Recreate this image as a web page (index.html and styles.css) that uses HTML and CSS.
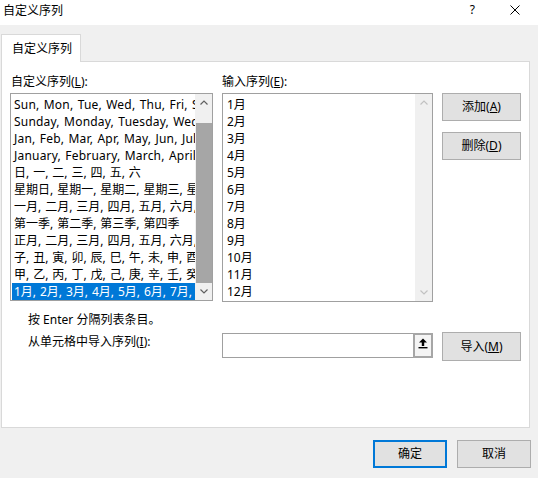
FILE: index.html
```html
<!DOCTYPE html>
<html lang="zh-CN">
<head>
<meta charset="utf-8">
<title>自定义序列</title>
<link rel="stylesheet" href="styles.css">
</head>
<body>
<div class="titlebar">
  <span class="title">自定义序列</span>
  <div class="controls">
    <span class="help">?</span>
    <svg class="close" width="10" height="10" viewBox="0 0 10 10"><path d="M0.5 0.5 L9.5 9.5 M9.5 0.5 L0.5 9.5" stroke="#000" stroke-width="1" fill="none"/></svg>
  </div>
</div>
<div class="tabs"><div class="tab">自定义序列</div></div>
<div class="panel">
  <div class="top">
    <div class="label first">自定义序列(<u>L</u>):</div>
    <div class="label">输入序列(<u>E</u>):</div>
    <div class="spacer"></div>
    <div class="listbox lists">
      <div class="items">
        <div class="item latin">Sun, Mon, Tue, Wed, Thu, Fri, Sat</div>
        <div class="item latin">Sunday, Monday, Tuesday, Wednesday, Thursday, Friday, Saturday</div>
        <div class="item latin">Jan, Feb, Mar, Apr, May, Jun, Jul, Aug, Sep, Oct, Nov, Dec</div>
        <div class="item latin">January, February, March, April, May, June, July, August, September, October, November, December</div>
        <div class="item">日, 一, 二, 三, 四, 五, 六</div>
        <div class="item">星期日, 星期一, 星期二, 星期三, 星期四, 星期五, 星期六</div>
        <div class="item">一月, 二月, 三月, 四月, 五月, 六月, 七月, 八月, 九月, 十月, 十一月, 十二月</div>
        <div class="item">第一季, 第二季, 第三季, 第四季</div>
        <div class="item">正月, 二月, 三月, 四月, 五月, 六月, 七月, 八月, 九月, 十月, 十一月, 腊月</div>
        <div class="item">子, 丑, 寅, 卯, 辰, 巳, 午, 未, 申, 酉, 戌, 亥</div>
        <div class="item">甲, 乙, 丙, 丁, 戊, 己, 庚, 辛, 壬, 癸</div>
        <div class="item selected">1月, 2月, 3月, 4月, 5月, 6月, 7月, 8月, 9月, 10月, 11月, 12月</div>
      </div>
      <div class="scrollbar">
        <div class="arrow"><svg width="8" height="5" viewBox="0 0 8 5"><path d="M0.5 4.5 L4 1 L7.5 4.5" stroke="#606060" stroke-width="1.2" fill="none"/></svg></div>
        <div class="track"><div class="thumb"></div></div>
        <div class="arrow"><svg width="8" height="5" viewBox="0 0 8 5"><path d="M0.5 0.5 L4 4 L7.5 0.5" stroke="#606060" stroke-width="1.2" fill="none"/></svg></div>
      </div>
    </div>
    <div class="listbox entries">
      <div class="items">
        <div class="entry">1月</div>
        <div class="entry">2月</div>
        <div class="entry">3月</div>
        <div class="entry">4月</div>
        <div class="entry">5月</div>
        <div class="entry">6月</div>
        <div class="entry">7月</div>
        <div class="entry">8月</div>
        <div class="entry">9月</div>
        <div class="entry">10月</div>
        <div class="entry">11月</div>
        <div class="entry">12月</div>
      </div>
      <div class="scrollbar">
        <div class="arrow"><svg width="8" height="5" viewBox="0 0 8 5"><path d="M0.5 4.5 L4 1 L7.5 4.5" stroke="#c2c2c2" stroke-width="1.2" fill="none"/></svg></div>
        <div class="track"></div>
        <div class="arrow"><svg width="8" height="5" viewBox="0 0 8 5"><path d="M0.5 0.5 L4 4 L7.5 0.5" stroke="#c2c2c2" stroke-width="1.2" fill="none"/></svg></div>
      </div>
    </div>
    <div class="side">
      <button class="btn">添加(<u>A</u>)</button>
      <button class="btn">删除(<u>D</u>)</button>
    </div>
  </div>
  <div class="hint">按 Enter 分隔列表条目。</div>
  <div class="import">
    <div class="import-label">从单元格中导入序列(<u>I</u>):</div>
    <div class="refedit">
      <div class="refinput"></div>
      <div class="pick"><svg width="10" height="11" viewBox="0 0 10 11"><path d="M5 0.5 L9 4.5 L6.2 4.5 L6.2 8 L3.8 8 L3.8 4.5 L1 4.5 Z" fill="#000"/><rect x="0.5" y="9" width="9" height="1.4" fill="#000"/></svg></div>
    </div>
    <button class="btn import-btn">导入(<u>M</u>)</button>
  </div>
</div>
<div class="footer">
  <button class="btn dlg primary">确定</button>
  <button class="btn dlg">取消</button>
</div>
</body>
</html>
```
FILE: styles.css
```css
* { box-sizing: border-box; }
html, body {
  margin: 0;
  padding: 0;
}
body {
  width: 538px;
  height: 478px;
  overflow: hidden;
  background: #f0f0f0;
  font-family: "Noto Sans", "Noto Sans CJK SC", sans-serif;
  font-size: 12px;
  color: #000;
}
u { text-decoration: underline; text-underline-offset: 1px; }

.titlebar {
  height: 25px;
  background: #fff;
  display: flex;
  align-items: flex-start;
}
.title {
  padding: 2px 0 0 3px;
  line-height: 17px;
}
.controls {
  margin-left: auto;
  display: flex;
  align-items: center;
  height: 20px;
  padding-right: 18px;
}
.help {
  font-size: 12px;
  line-height: 14px;
  margin-right: 35px;
}
.close { display: block; margin-top: 0; }

.tabs {
  padding: 9px 0 0 1px;
  display: flex;
}
.tab {
  position: relative;
  z-index: 1;
  width: 80px;
  height: 28px;
  margin-bottom: -1px;
  background: #fff;
  border: 1px solid #d9d9d9;
  border-bottom: none;
  padding: 6px 0 0 10px;
  line-height: 16px;
}

.panel {
  margin-left: 1px;
  width: 529px;
  height: 367px;
  background: #fff;
  border: 1px solid #d9d9d9;
  padding: 12px 0 0 8px;
}

.top {
  display: grid;
  grid-template-columns: 203px 211px 79px;
  column-gap: 9px;
  align-items: start;
}
.label {
  line-height: 16px;
  height: 16px;
  margin-bottom: 3px;
}
.label.first { padding-left: 1px; }

.listbox {
  display: flex;
  border: 1px solid #a0a0a0;
  background: #fff;
}
.lists { height: 208px; }
.entries { height: 209px; }
.items {
  flex: 1;
  min-width: 0;
  overflow: hidden;
  padding-top: 2px;
}
.item {
  height: 17px;
  line-height: 17px;
  margin-left: 1px;
  padding-left: 2px;
  white-space: nowrap;
  overflow: hidden;
  word-spacing: 0.8px;
}
.item.latin {
  letter-spacing: 0.2px;
  word-spacing: 1px;
}
.item.selected {
  background: #0078d7;
  color: #fff;
}
.entry {
  height: 17px;
  line-height: 17px;
  padding-left: 4px;
  white-space: nowrap;
}
.scrollbar {
  width: 17px;
  background: #f0f0f0;
  display: flex;
  flex-direction: column;
}
.arrow {
  height: 17px;
  display: flex;
  align-items: center;
  justify-content: center;
}
.arrow svg { display: block; }
.track {
  flex: 1;
  padding-top: 12px;
  display: flex;
  flex-direction: column;
}
.thumb {
  flex: 1;
  margin-left: 1px;
  background: #a6a6a6;
}

.side {
  display: flex;
  flex-direction: column;
  gap: 11px;
}
.btn {
  font: inherit;
  color: #000;
  background: #e1e1e1;
  border: 1px solid #adadad;
  border-radius: 0;
  padding: 0;
  margin: 0;
  width: 79px;
  height: 28px;
  line-height: 16px;
  text-align: center;
}

.hint {
  margin-top: 10px;
  padding-left: 18px;
  line-height: 16px;
}

.import {
  margin-top: 4px;
  display: grid;
  grid-template-columns: 203px 211px 79px;
  column-gap: 9px;
  align-items: start;
}
.import-label {
  padding: 2px 0 0 18px;
  line-height: 16px;
}
.refedit {
  margin-top: 1px;
  height: 25px;
  border: 1px solid #a0a0a0;
  display: flex;
}
.refinput { flex: 1; }
.pick {
  width: 20px;
  margin: -1px -1px -1px 0;
  border: 2px solid #a6a6a6;
  background: #f4f4f4;
  display: flex;
  justify-content: center;
  padding-top: 3px;
}
.pick svg { display: block; }
.import-btn { height: 29px; }

.footer {
  margin-top: 12px;
  display: flex;
  justify-content: flex-end;
  gap: 10px;
  padding-right: 7px;
}
.dlg {
  width: 74px;
  height: 28px;
}
.primary {
  border: 2px solid #0078d7;
}
```
